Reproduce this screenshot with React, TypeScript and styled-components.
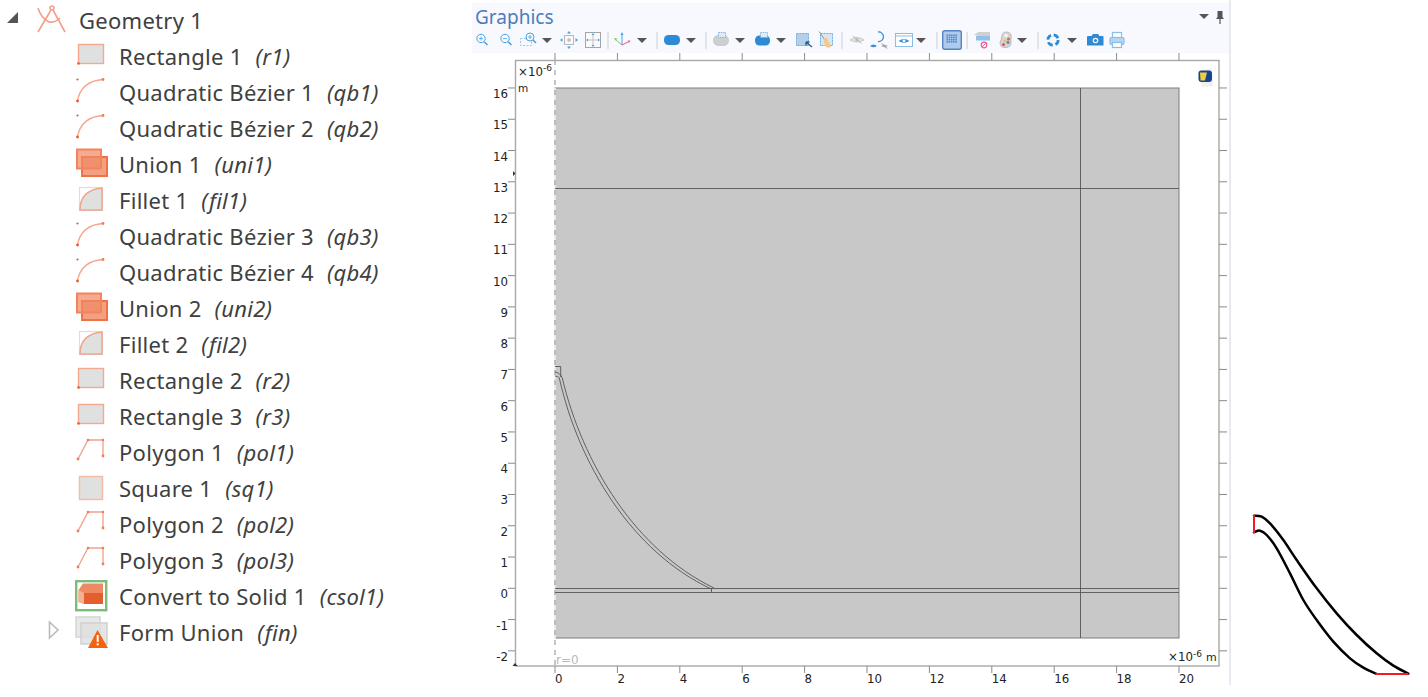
import React from 'react';
import styled, { createGlobalStyle } from 'styled-components';

const GlobalStyle = createGlobalStyle`
  html, body { margin: 0; background: #fff; }
  body { font-family: "Noto Sans", "Open Sans", sans-serif; }
`;

const Page = styled.div`
  display: flex;
  width: 1428px;
  height: 697px;
  overflow: hidden;
  background: #fff;
`;

const TreePanel = styled.div`
  width: 472px;
  padding-top: 3px;
  flex: none;
`;

const Row = styled.div<{ $depth: number }>`
  display: grid;
  grid-template-columns: ${p => (p.$depth ? '75px 44px 1fr' : '36px 43px 1fr')};
  align-items: center;
  height: 36px;
`;

const ExpanderSlot = styled.div<{ $depth: number }>`
  padding-left: ${p => (p.$depth ? 48 : 6)}px;
  height: 36px;
`;

const NodeIcon = styled.svg`
  display: block;
  width: 33px;
  height: 36px;
`;

const Label = styled.span`
  font-size: 22px;
  color: #404040;
  white-space: nowrap;
  letter-spacing: 0.28px;
  line-height: 34px;
  padding-bottom: 2px;
`;

const Tag = styled.em`
  margin-left: 13px;
  font-style: italic;
`;

const GraphicsPanel = styled.div`
  width: 757px;
  height: 685px;
  flex: none;
  border-right: 2px solid #e9e9f1;
`;

const Dock = styled.div`
  height: 50px;
  margin-top: 3px;
  background: #f7f9fe;
`;

const TitleBar = styled.div`
  display: flex;
  align-items: center;
  justify-content: space-between;
  height: 27px;
  padding: 0 5px 0 3px;
`;

const Title = styled.span`
  font-size: 19px;
  color: #4d7cbc;
`;

const PinGroup = styled.div`
  display: flex;
  align-items: center;
  gap: 7px;
`;

const Toolbar = styled.div`
  display: flex;
  align-items: center;
  height: 20px;
`;

const ToolIcon = styled.svg<{ $gap: number }>`
  display: block;
  flex: none;
  width: 20px;
  height: 20px;
  margin-left: ${p => p.$gap}px;
`;

const Caret = styled.span<{ $gap: number }>`
  flex: none;
  width: 0;
  height: 0;
  margin-left: ${p => p.$gap}px;
  border-left: 5px solid transparent;
  border-right: 5px solid transparent;
  border-top: 5px solid #555;
`;

const Separator = styled.span<{ $gap: number }>`
  flex: none;
  width: 2px;
  height: 17px;
  margin-left: ${p => p.$gap}px;
  background: #e2e4e8;
`;

const Chart = styled.svg`
  display: block;
  width: 757px;
  height: 632px;
  font-family: "DejaVu Sans", sans-serif;
`;

const SketchPanel = styled.div`
  padding: 512px 0 0 19px;
`;

const Sketch = styled.svg`
  display: block;
  width: 165px;
  height: 168px;
`;

// smooth line through points, catmull-rom style
const smooth = (pts: number[][]) => {
  let d = `M${pts[0][0]} ${pts[0][1]}`;
  for (let i = 0; i < pts.length - 1; i++) {
    const a = pts[Math.max(i - 1, 0)], b = pts[i], c = pts[i + 1], e = pts[Math.min(i + 2, pts.length - 1)];
    d += ` C${b[0] + (c[0] - a[0]) / 6} ${b[1] + (c[1] - a[1]) / 6} ${c[0] - (e[0] - b[0]) / 6} ${c[1] - (e[1] - b[1]) / 6} ${c[0]} ${c[1]}`;
  }
  return d;
};

const RECT_STROKE = '#f2a98f';
const DOT = '#e8582c';
const FILL = '#dfe1e1';

const nodeIcons: Record<string, React.ReactNode> = {
  geometry: (
    <g fill="none" stroke="#f2a08a" strokeWidth="1.6">
      <circle cx="16" cy="5" r="2" />
      <path d="M15 7 L2 29 M17 7 L29 29 M2 5 Q5 15 13 19 Q19 20 24 15" />
    </g>
  ),
  rect: (
    <>
      <rect x="3.5" y="5.5" width="25" height="19" fill={FILL} stroke={RECT_STROKE} strokeWidth="1.4" />
      <circle cx="3.5" cy="24.5" r="1.3" fill={DOT} />
    </>
  ),
  bezier: (
    <>
      <path d="M2.5 26 Q6 6 28 4.5" fill="none" stroke="#f4a78e" strokeWidth="1.4" />
      <circle cx="2.5" cy="4.5" r="1.1" fill={DOT} />
      <circle cx="28" cy="4.5" r="1.4" fill="#ef7d58" />
      <circle cx="2.5" cy="26" r="1.4" fill={DOT} />
    </>
  ),
  union: (
    <>
      <rect x="7" y="10" width="25" height="19" fill="#f49f80" stroke="#ee7246" strokeWidth="2" />
      <rect x="2" y="2.5" width="24" height="19" fill="#f08a64" fillOpacity="0.72" stroke="#f0845c" strokeWidth="2" />
    </>
  ),
  fillet: (
    <>
      <rect x="4.5" y="4.5" width="23" height="23" fill="none" stroke="#dedede" strokeWidth="1.2" />
      <path d="M5 27 Q5 7 27 5 V27 Z" fill={FILL} stroke="#f0a58c" strokeWidth="1.5" />
    </>
  ),
  polygon: (
    <>
      <path d="M3 24 L13 5 H28 V21" fill="none" stroke="#f2a08a" strokeWidth="1.3" />
      <circle cx="3" cy="24" r="1.4" fill="#ef7d58" />
      <circle cx="13" cy="5" r="1.3" fill="#ef7d58" />
      <circle cx="28" cy="5" r="1.3" fill="#ef7d58" />
      <circle cx="28" cy="21" r="1.4" fill="#ef7d58" />
    </>
  ),
  square: <rect x="4.5" y="5.5" width="23" height="23" fill={FILL} stroke="#f5bda8" strokeWidth="1.5" />,
  solid: (
    <>
      <rect x="1.2" y="2.2" width="30" height="29" fill="#fff" stroke="#7cbb78" strokeWidth="2.4" />
      <path d="M3.5 11 L8 4.5 H28 V25 H9 L3.5 23 Z" fill="#ee8a63" />
      <path d="M3.5 11 L9 14 V25 L3.5 23 Z" fill="#f4b196" />
      <rect x="9" y="14" width="19" height="11" fill="#e55f2e" />
    </>
  ),
  warning: (
    <>
      <rect x="1" y="2" width="24" height="20" fill="#e8e8e8" stroke="#d6d6d6" strokeWidth="1.6" />
      <rect x="6" y="8" width="26" height="21" fill="#dedede" fillOpacity="0.8" stroke="#d2d2d2" strokeWidth="1.6" />
      <path d="M22.5 15 L33 33 H13 Z" fill="#f4620f" />
      <rect x="21.7" y="20" width="2" height="7" fill="#fff" />
      <rect x="21.7" y="28.3" width="2" height="2" fill="#fff" />
    </>
  ),
};

const rows = [
  ['rect', 'Rectangle 1', 'r1'],
  ['bezier', 'Quadratic Bézier 1', 'qb1'],
  ['bezier', 'Quadratic Bézier 2', 'qb2'],
  ['union', 'Union 1', 'uni1'],
  ['fillet', 'Fillet 1', 'fil1'],
  ['bezier', 'Quadratic Bézier 3', 'qb3'],
  ['bezier', 'Quadratic Bézier 4', 'qb4'],
  ['union', 'Union 2', 'uni2'],
  ['fillet', 'Fillet 2', 'fil2'],
  ['rect', 'Rectangle 2', 'r2'],
  ['rect', 'Rectangle 3', 'r3'],
  ['polygon', 'Polygon 1', 'pol1'],
  ['square', 'Square 1', 'sq1'],
  ['polygon', 'Polygon 2', 'pol2'],
  ['polygon', 'Polygon 3', 'pol3'],
  ['solid', 'Convert to Solid 1', 'csol1'],
  ['warning', 'Form Union', 'fin'],
];

const BLUE = '#4aa3e0';

const lens = (
  <>
    <circle cx="9" cy="8.5" r="4.2" fill="none" stroke={BLUE} strokeWidth="1" />
    <path d="M12.2 11.7 L15.5 15" stroke={BLUE} strokeWidth="1.6" />
  </>
);

const toolIcons: Record<string, React.ReactNode> = {
  zoomIn: <>{lens}<path d="M7 8.5 H11 M9 6.5 V10.5" stroke={BLUE} strokeWidth="0.8" /></>,
  zoomOut: <>{lens}<path d="M7 8.5 H11" stroke={BLUE} strokeWidth="0.8" /></>,
  zoomBox: (
    <>
      <rect x="1.5" y="8.5" width="11" height="7" fill="none" stroke="#7fb6e2" strokeWidth="0.8" strokeDasharray="2 1.5" />
      <circle cx="11" cy="7" r="4" fill="#f7f9fe" stroke={BLUE} strokeWidth="1" />
      <path d="M14 10 L17 13" stroke={BLUE} strokeWidth="1.6" />
      <path d="M9 7 H13 M11 5 V9" stroke={BLUE} strokeWidth="0.8" />
    </>
  ),
  extents: (
    <>
      <rect x="5.5" y="5.5" width="9" height="9" fill="#f7f7f7" stroke="#bbb" />
      <path d="M8 10 H12 M10 8 V12" stroke="#aaa" />
      <path d="M10 1 L12 3.5 H8 Z M10 19 L12 16.5 H8 Z M1 10 L3.5 8 V12 Z M19 10 L16.5 8 V12 Z" fill={BLUE} />
    </>
  ),
  fit: (
    <>
      <rect x="2.5" y="2.5" width="15" height="15" fill="#f9fafc" stroke="#a4a4a4" />
      <path d="M10 4 V16 M4 10 H16" stroke="#c4c4c4" />
      <path d="M10 3 L11.5 5 H8.5 Z M10 17 L11.5 15 H8.5 Z M3 10 L5 8.5 V11.5 Z M17 10 L15 8.5 V11.5 Z" fill={BLUE} />
    </>
  ),
  axes: (
    <>
      <path d="M10 15 V4" stroke="#4aa3e0" />
      <path d="M10 2 L11.6 5 H8.4 Z" fill="#4aa3e0" />
      <path d="M10 15 L3 9" stroke="#7ac85a" />
      <path d="M2 8 L5.2 8.5 L3.6 10.8 Z" fill="#7ac85a" />
      <path d="M10 15 L17 11.5" stroke="#ea5a8c" />
      <path d="M18.5 10.5 L15.8 10.6 L17 13 Z" fill="#ea5a8c" />
    </>
  ),
  pill: <rect x="2" y="5" width="16" height="10" rx="4.5" fill="#2f8ad6" />,
  greyBlock: (
    <>
      <rect x="1.5" y="5.5" width="15" height="10" rx="4.5" fill="#cdd0d0" stroke="#bcc0c0" strokeWidth="0.6" />
      <rect x="6.5" y="2.5" width="7" height="5" fill="#dcebf7" stroke="#6aaee2" strokeWidth="0.8" strokeDasharray="1.5 0.8" />
    </>
  ),
  blueBlock: (
    <>
      <rect x="2" y="5.5" width="15" height="10" rx="4.5" fill="#2f8ad6" />
      <rect x="7.5" y="2.5" width="7" height="5" fill="#dcebf7" stroke="#6aaee2" strokeWidth="0.8" strokeDasharray="1.5 0.8" />
    </>
  ),
  selectBox: (
    <>
      <rect x="2.5" y="3.5" width="12" height="12" fill="#b4cfea" stroke="#5aa4de" strokeWidth="0.9" strokeDasharray="2 1" />
      <path d="M12 12 L18 17 M12 12 L12 15.5 M12 12 L15.5 12" stroke="#2a5f90" strokeWidth="1.4" />
    </>
  ),
  broom: (
    <>
      <rect x="4.5" y="3.5" width="12" height="12" fill="#d6e6f4" stroke="#5aa4de" strokeWidth="0.9" strokeDasharray="2 1" />
      <path d="M3 1.5 L9 10" stroke="#999" />
      <path d="M7.5 9 L11 7.5 L15 17 Q11 19 9 16 Z" fill="#f6c98a" />
    </>
  ),
  eyeOff: (
    <>
      <path d="M3 10 Q10 5 17 10 Q10 14 3 10 Z" fill="#e2e2e2" stroke="#c8c8c8" />
      <circle cx="10" cy="9.8" r="1.6" fill="#bbb" />
      <path d="M6 6 L14.5 13.5" stroke="#b8b8b8" />
    </>
  ),
  resetEyes: (
    <>
      <path d="M9 2 A4.8 4.8 0 1 1 9 11.5" fill="none" stroke="#3f8fd0" strokeWidth="1.3" />
      <path d="M1 16 Q4.5 13 8 16 Q4.5 18.5 1 16 Z" fill="#3f8fd0" />
      <path d="M12 16 Q15.5 13 19 16 Q15.5 18.5 12 16 Z" fill="#b9b9b9" />
      <path d="M13 13.5 L18 18.5" stroke="#888" />
    </>
  ),
  windowEye: (
    <>
      <rect x="1.5" y="3.5" width="17" height="13" fill="#fff" stroke="#8cbde6" />
      <path d="M1.5 6 H18.5" stroke="#8cbde6" />
      <path d="M4.5 11 Q10 7 15.5 11 Q10 14.5 4.5 11 Z" fill="#3f8fd0" />
      <circle cx="10" cy="10.8" r="1.4" fill="#fff" />
    </>
  ),
  gridOn: (
    <>
      <rect x="0.7" y="0.7" width="18.6" height="18.6" rx="2" fill="#afcaea" stroke="#5585c0" strokeWidth="1.4" />
      <g fill="#4a8ed4">
        {[4.5, 6.7, 8.9, 11.1, 13.3].map(x =>
          [4.5, 6.7, 8.9, 11.1].map(y => <rect key={`${x}-${y}`} x={x} y={y} width="1.6" height="1.6" />)
        )}
      </g>
    </>
  ),
  clearBox: (
    <>
      <path d="M1 5 L5 2 H17 V6 L6 6 Z" fill="#cfcfcf" />
      <rect x="3" y="6" width="14" height="4.5" fill="#8cc2ec" />
      <circle cx="11" cy="15" r="2.8" fill="#fff" stroke="#ea5f90" strokeWidth="1.2" />
      <path d="M9 17 L13 13" stroke="#ea5f90" />
    </>
  ),
  palette: (
    <>
      <path d="M10 2 C14.5 2 16 5 15 9 C15 13 16 17.5 9 17.5 C4 17.5 3 13 5 10 C6 8 5 2.5 10 2 Z" fill="#d4d4d4" stroke="#a8a8a8" strokeWidth="0.7" />
      <circle cx="10" cy="5.5" r="1.8" fill="#f4f4f4" />
      <circle cx="12.5" cy="9" r="1.5" fill="#e8643c" />
      <circle cx="9" cy="11" r="1.5" fill="#f0c040" />
      <circle cx="12" cy="12.5" r="1.4" fill="#3f8fd0" />
      <circle cx="7.5" cy="14.5" r="1.5" fill="#e84a7f" />
    </>
  ),
  aperture: <circle cx="10" cy="10" r="5.2" fill="none" stroke="#2f8ad6" strokeWidth="2.8" strokeDasharray="5.4 2.8" />,
  camera: (
    <>
      <path d="M3 6 H6.5 L8 4 H13 L14.5 6 H17.5 Q18.5 6 18.5 7 V15.5 H2 V7 Q2 6 3 6 Z" fill="#2f8ad6" />
      <circle cx="10.5" cy="10.5" r="2.8" fill="#f7f9fe" />
      <circle cx="10.5" cy="10.5" r="1.6" fill="#2f8ad6" />
    </>
  ),
  printer: (
    <>
      <rect x="5.5" y="2.5" width="9" height="5" fill="#fff" stroke="#8cbde6" strokeWidth="1.2" />
      <rect x="3" y="7.5" width="14" height="7" rx="1.5" fill="#b4d6f0" stroke="#8cbde6" strokeWidth="1.2" />
      <rect x="5.5" y="12.5" width="9" height="5" fill="#fff" stroke="#8cbde6" strokeWidth="1.2" />
    </>
  ),
};

// [type or icon name, gap to the previous item]
const tools: [string, number][] = [
  ['zoomIn', 0], ['zoomOut', 4], ['zoomBox', 3], ['caret', 3], ['extents', 7], ['fit', 4], ['sep', 4],
  ['axes', 3], ['caret', 5], ['sep', 9], ['pill', 4], ['caret', 4], ['sep', 9], ['greyBlock', 5], ['caret', 3],
  ['blueBlock', 8], ['caret', 3], ['selectBox', 8], ['broom', 2], ['sep', 5], ['eyeOff', 4], ['resetEyes', 2],
  ['windowEye', 5], ['caret', 2], ['sep', 10], ['gridOn', 4], ['sep', 4], ['clearBox', 5], ['palette', 3],
  ['caret', 1], ['sep', 10], ['aperture', 4], ['caret', 4], ['camera', 8], ['printer', 2],
];

const xTick = (v: number) => 555 + v * 31.2;
const yTick = (v: number) => 588.3 - v * 31.27;
const xValues = Array.from({ length: 11 }, (_, i) => i * 2);
const yValues = Array.from({ length: 19 }, (_, i) => i - 2);

const upperEdge = [[372, 47], [395, 50], [420, 70], [460, 120], [500, 180], [560, 265], [620, 340], [680, 405], [740, 460], [790, 497], [835, 521]];
const lowerEdge = [[372, 97], [390, 92], [410, 105], [440, 145], [480, 220], [520, 300], [560, 360], [610, 425], [660, 475], [700, 503], [738, 521]];
const toSketch = (pts: number[][]) => pts.map(([x, y]) => [x / 3 + 1130 - 1250, y / 3 + 500 - 512]);

const TreeRow: React.FC<{ depth: number; icon: string; name: string; tag: string; expander?: React.ReactNode }> = ({ depth, icon, name, tag, expander }) => (
  <Row $depth={depth}>
    <ExpanderSlot $depth={depth}>{expander}</ExpanderSlot>
    <NodeIcon viewBox="0 0 33 36">{nodeIcons[icon]}</NodeIcon>
    <Label>
      {name}
      {tag && <Tag>({tag})</Tag>}
    </Label>
  </Row>
);

const App: React.FC = () => (
  <Page>
    <GlobalStyle />
    <TreePanel>
      <TreeRow
        depth={0}
        icon="geometry"
        name="Geometry 1"
        tag=""
        expander={
          <svg width="16" height="36">
            <path d="M1 20 L12 9 V20 Z" fill="#555" />
          </svg>
        }
      />
      {rows.map(([icon, name, tag]) => (
        <TreeRow
          key={tag}
          depth={1}
          icon={icon}
          name={name}
          tag={tag}
          expander={
            tag === 'fin' ? (
              <svg width="14" height="36">
                <path d="M1.5 7 L10 15 L1.5 23 Z" fill="#fff" stroke="#bbb" strokeWidth="1.6" />
              </svg>
            ) : undefined
          }
        />
      ))}
    </TreePanel>

    <GraphicsPanel>
      <Dock>
        <TitleBar>
          <Title>Graphics</Title>
          <PinGroup>
            <Caret $gap={0} />
            <svg width="8" height="14" viewBox="0 0 8 14">
              <path d="M1.5 1 H6.5 V7 L8 9 H4.6 V14 H3.4 V9 H0 L1.5 7 Z" fill="#555" />
            </svg>
          </PinGroup>
        </TitleBar>
        <Toolbar>
          {tools.map(([name, gap], i) =>
            name === 'caret' ? (
              <Caret key={i} $gap={gap} />
            ) : name === 'sep' ? (
              <Separator key={i} $gap={gap} />
            ) : (
              <ToolIcon key={i} $gap={gap} viewBox="0 0 20 20">
                {toolIcons[name]}
              </ToolIcon>
            )
          )}
        </Toolbar>
      </Dock>

      <Chart viewBox="472 53 757 632">
        <rect x="555" y="88" width="624" height="550" fill="#c8c8c8" stroke="#7c7c7c" />
        <path d="M555 88 V666" stroke="#fff" strokeWidth="1.5" />
        <path d="M555 60 V666" stroke="#8c8c8c" strokeDasharray="5 5" />

        <g fill="none" stroke="#555" strokeWidth="0.9">
          <path d="M555 188.5 H1179 M1080.5 88 V638 M555 588.5 H1179 M555 592.5 H1179" />
          <path d="M562.3 378 C582 462 635 550 714 588" />
          <path d="M559.3 378 C578.5 464 632 552 711.3 589" />
          <path d="M555 366.5 H560.7 V377 M555 372 Q560 372.5 562.3 378 M555 376 Q558 376 559.5 378 M711.5 588.5 V592.5" />
        </g>

        <rect x="515.5" y="60.5" width="703.5" height="605.5" fill="none" stroke="#a8a8a8" strokeWidth="1.4" />
        <g stroke="#8a8a8a">
          {xValues.map(v => (
            <path key={v} d={`M${xTick(v)} 53 V60 M${xTick(v)} 666 V673`} />
          ))}
          {yValues.map(v => (
            <path key={v} d={`M508 ${yTick(v)} H515 M1219 ${yTick(v)} H1227`} />
          ))}
        </g>
        <path d="M512.5 666 L515 663 L517.5 666 Z M513 171 L515.5 173.5 L513 176 Z" fill="#333" />

        <g fontSize="11.8" fill="#222">
          {xValues.map(v => (
            <text key={v} x={xTick(v)} y="683">{v}</text>
          ))}
          {yValues.map(v => (
            <text key={v} x="508" y={yTick(v) + 10} textAnchor="end">{v < 0 ? `-${-v}` : v}</text>
          ))}
          <text x="518" y="76">
            ×10<tspan fontSize="9" dy="-5">-6</tspan>
          </text>
          <text x="518" y="92" fontSize="10.5">m</text>
          <text x="1168" y="661">
            ×10<tspan fontSize="9" dy="-4">-6</tspan>
            <tspan dy="4" dx="4" fontSize="11">m</tspan>
          </text>
        </g>
        <text x="556" y="664" fontSize="12" fill="#b9b9b9">r=0</text>

        <path d="M1197 71 L1212 68 L1213 86 L1202 87 Z" fill="#f0f0f0" />
        <rect x="1198.5" y="70.5" width="13.5" height="11.5" rx="3" fill="#17458f" />
        <path d="M1200 72.5 H1207 L1205 80.5 H1200.5 Z" fill="#f0d038" />
      </Chart>
    </GraphicsPanel>

    <SketchPanel>
      <Sketch viewBox="0 0 165 168">
        <g fill="none" stroke="#000" strokeWidth="2.5" strokeLinecap="round">
          <path d={smooth(toSketch(upperEdge))} />
          <path d={smooth(toSketch(lowerEdge))} />
        </g>
        <path d="M4 3 V21 M125.5 162 H158.5" stroke="#ee1c25" strokeWidth="2" fill="none" />
      </Sketch>
    </SketchPanel>
  </Page>
);

export default App;
